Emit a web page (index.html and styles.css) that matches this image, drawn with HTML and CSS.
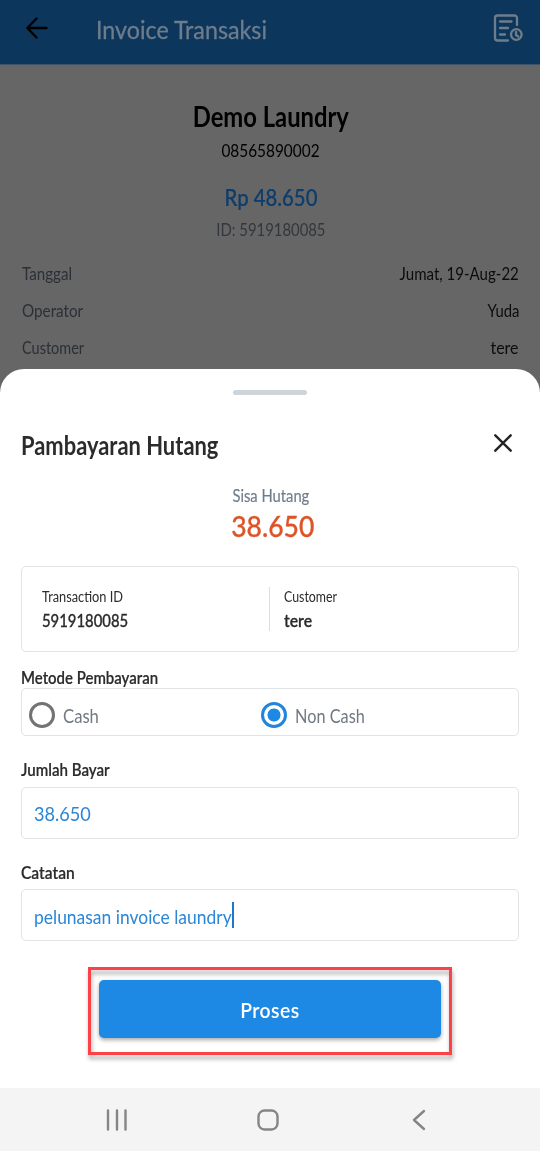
FILE: index.html
```html
<!DOCTYPE html>
<html lang="id">
<head>
<meta charset="utf-8">
<title>Invoice Transaksi</title>
<link rel="stylesheet" href="styles.css">
</head>
<body>
<div class="screen">
  <div class="page">
    <header class="appbar">
      <svg class="back" viewBox="0 0 22 22"><path d="M20.500 11H1.500M10.500 1.500L1.300 11l9.200 9.500"/></svg>
      <h1 class="appbar-title t">Invoice Transaksi</h1>
      <svg class="log" viewBox="0 0 30 28"><path d="M24 11V4a2.500 2.500 0 0 0-2.500-2.500h-17A2.500 2.500 0 0 0 2 4v20a2.500 2.500 0 0 0 2.500 2.500H15M7 7.500h11.500M7 14h8M7 20.500h5"/><circle cx="23.300" cy="20.500" r="5.300"/><path d="M23 17.800v3.200l2.200 1.500"/></svg>
    </header>
    <section class="summary">
      <h2 class="shop t">Demo Laundry</h2>
      <p class="phone t">08565890002</p>
      <p class="total t">Rp 48.650</p>
      <p class="invoice-id t">ID: 5919180085</p>
    </section>
    <dl class="details">
      <div class="row"><dt class="t k1">Tanggal</dt><dd class="t v1">Jumat, 19-Aug-22</dd></div>
      <div class="row"><dt class="t k2">Operator</dt><dd class="t v2">Yuda</dd></div>
      <div class="row"><dt class="t k3">Customer</dt><dd class="t v3">tere</dd></div>
    </dl>
  </div>

  <main class="sheet">
    <div class="handle"></div>
    <div class="sheet-head">
      <h2 class="sheet-title t">Pambayaran Hutang</h2>
      <svg class="close" viewBox="0 0 18 18"><path d="M1.300 1.300l15.400 15.400M16.700 1.300L1.300 16.700"/></svg>
    </div>
    <div class="debt">
      <p class="debt-label t">Sisa Hutang</p>
      <p class="debt-value t">38.650</p>
    </div>
    <div class="card">
      <div class="cell">
        <p class="cell-label cl1 t">Transaction ID</p>
        <p class="cell-value cv1 t">5919180085</p>
      </div>
      <div class="cell second">
        <p class="cell-label cl2 t">Customer</p>
        <p class="cell-value cv2 t">tere</p>
      </div>
    </div>
    <p class="label method-label t">Metode Pembayaran</p>
    <div class="methods">
      <div class="option"><span class="radio"></span><span class="option-text o1 t">Cash</span></div>
      <div class="option"><span class="radio on"></span><span class="option-text o2 t">Non Cash</span></div>
    </div>
    <p class="label pay-label t">Jumlah Bayar</p>
    <div class="field"><span class="field-text f1 t">38.650</span></div>
    <p class="label note-label t">Catatan</p>
    <div class="field"><span class="field-text f2 t">pelunasan invoice laundry</span><i class="caret"></i></div>
    <div class="action">
      <div class="submit"><span class="submit-text t">Proses</span></div>
      <div class="highlight"></div>
    </div>
  </main>

  <nav class="navbar">
    <svg class="nav-icon" viewBox="0 0 24 24"><path d="M3 2.500v19M12 2.500v19M20.500 2.500v19"/></svg>
    <svg class="nav-icon" viewBox="0 0 24 24"><rect x="2.500" y="2.500" width="19" height="19" rx="6"/></svg>
    <svg class="nav-icon" viewBox="0 0 24 24"><path d="M17 3L7 12l10 9"/></svg>
  </nav>
</div>
</body>
</html>
```
FILE: styles.css
```css
* { box-sizing: border-box; }
body, h1, h2, p, dl, dd { margin: 0; }
body { font-family: Lato, "Noto Sans", sans-serif; background: #666; }
svg { fill: none; stroke: currentColor; stroke-linecap: round; stroke-linejoin: round; }

/* Condensed lettering: each text sets its own width factor. */
.t { display: block; width: max-content; white-space: nowrap; transform: scaleX(var(--w, .87)); transform-origin: left center; }

.screen { width: 540px; height: 1151px; display: flex; flex-direction: column; overflow: hidden; }
.page { height: 393px; margin-bottom: -24px; flex: none; background: #666; color: #000; }

.appbar { height: 65px; display: flex; align-items: center; padding: 0 17px 9px 26px; background: #0c365c; border-bottom: 1px solid #3e5368; }
.back { width: 22px; height: 22px; stroke-width: 2.400; color: #000; }
.appbar-title { --w: .905; margin: 2px 0 0 48px; font-size: 25.700px; font-weight: 400; line-height: 32px; color: #6f7d8b; -webkit-text-stroke: .3px; }
.log { width: 30px; height: 28px; margin-left: auto; stroke-width: 2.300; color: #6f7d8b; }

.summary { display: flex; flex-direction: column; align-items: center; padding: 34px 0 0 1px; }
.summary .t, .debt .t { transform-origin: center; }
.shop { --w: .815; font-size: 29.200px; font-weight: 700; line-height: 34px; }
.phone { --w: .885; margin-top: 8px; font-size: 17.400px; line-height: 20px; }
.total { --w: .861; margin-top: 22px; font-size: 23.600px; font-weight: 500; line-height: 28px; color: #0c3d6d; -webkit-text-stroke: .2px; }
.invoice-id { --w: .855; margin-top: 9px; font-size: 17.400px; line-height: 20px; color: #33373c; }

.details { padding: 16px 21px 0 22px; }
.row { height: 36.700px; display: flex; align-items: center; justify-content: space-between; font-size: 17.400px; line-height: 20px; }
.row dt { color: #2b3037; }
.row dd { color: #0c0c0c; transform-origin: right center; }
.k1 { --w: .872; } .k2 { --w: .876; } .k3 { --w: .833; }
.v1 { --w: .865; } .v2 { --w: .855; } .v3 { --w: .919; }

.sheet { position: relative; height: 719px; flex: none; padding: 21px 21px 0; background: #fff; border-radius: 24px 24px 0 0; color: #2c2a2a; }
.handle { width: 74px; height: 5px; margin: 0 auto; border-radius: 3px; background: #cdd4da; }
.sheet-head { display: flex; justify-content: space-between; align-items: center; height: 34px; margin-top: 33px; }
.sheet-title { --w: .853; font-size: 25.700px; font-weight: 700; line-height: 34px; }
.close { width: 18px; height: 18px; margin: 0 7px 4px 0; stroke-width: 2.400; color: #252323; }

.debt { display: flex; flex-direction: column; align-items: center; margin-top: 23px; padding-left: 1px; }
.debt-label { --w: .819; font-size: 18px; line-height: 20px; color: #6f7d8b; -webkit-text-stroke: .2px; }
.debt-value { --w: .908; margin: 4px 0 0 5px; font-size: 29.200px; font-weight: 500; line-height: 34px; color: #dc5427; -webkit-text-stroke: .3px; }

.card { height: 86px; margin-top: 23px; padding: 20px; display: flex; border: 1px solid #e0e4e6; border-radius: 5px; }
.cell { width: 227px; }
.second { width: auto; height: 44px; padding-left: 14px; border-left: 1px solid #d9dde6; }
.cell-label { font-size: 14.600px; line-height: 20px; }
.cell-value { margin-top: 4px; font-size: 17.400px; font-weight: 500; line-height: 20px; -webkit-text-stroke: .3px; }
.cl1 { --w: .877; } .cl2 { --w: .848; } .cv1 { --w: .854; } .cv2 { --w: .908; font-weight: 600; }

.label { font-size: 17.400px; font-weight: 600; line-height: 20px; -webkit-text-stroke: .2px; }
.method-label { --w: .86; margin-top: 16px; }
.methods { height: 48px; display: flex; align-items: center; border: 1px solid #e0e4e6; border-radius: 5px; padding: 7px 7px 0; }
.option { width: 232px; display: flex; align-items: center; gap: 8px; }
.radio { width: 26px; height: 26px; margin-top: -2px; border: 3px solid #737373; border-radius: 50%; }
.radio.on { border-color: #2384dc; background: radial-gradient(circle, #1e88e5 6.200px, #fff 6.800px); }
.option-text { font-size: 19.400px; line-height: 24px; color: #737983; }
.o1 { --w: .859; } .o2 { --w: .84; }

.pay-label { --w: .868; margin-top: 24px; }
.note-label { --w: .895; margin-top: 24px; }
.field { height: 52px; margin-top: 6px; padding: 1px 12px 0; display: flex; align-items: center; border: 1px solid #e0e4e6; border-radius: 5px; color: #2b86d6; }
.pay-label + .field { margin-top: 7px; }
.field-text { font-size: 19.400px; line-height: 26px; }
.f1 { --w: .935; } .f2 { --w: .869; font-size: 20.100px; }
.caret { width: 2px; height: 26px; margin: -2px 0 0 -29px; background: #1e78c8; }

.action { position: relative; width: 342px; margin: 39px auto 0; }
.submit { height: 58px; display: flex; align-items: center; justify-content: center; padding-top: 1px; border-radius: 5px; background: #1e88e5; color: #fff; box-shadow: 0 2px 4px rgba(0, 0, 0, .35); }
.submit-text { --w: .93; transform-origin: center; font-size: 20.800px; font-weight: 600; line-height: 26px; letter-spacing: .5px; }
.highlight { position: absolute; inset: -13px -11px -17px; border: 3px solid #fd4147; filter: drop-shadow(1px 4px 2px rgba(0, 0, 0, .32)); }

.navbar { height: 63px; flex: none; display: flex; align-items: center; justify-content: space-between; padding: 1px 109px 0 105px; background: #f4f4f4; color: #858585; }
.nav-icon { width: 24px; height: 24px; stroke-width: 2.400; }
```
